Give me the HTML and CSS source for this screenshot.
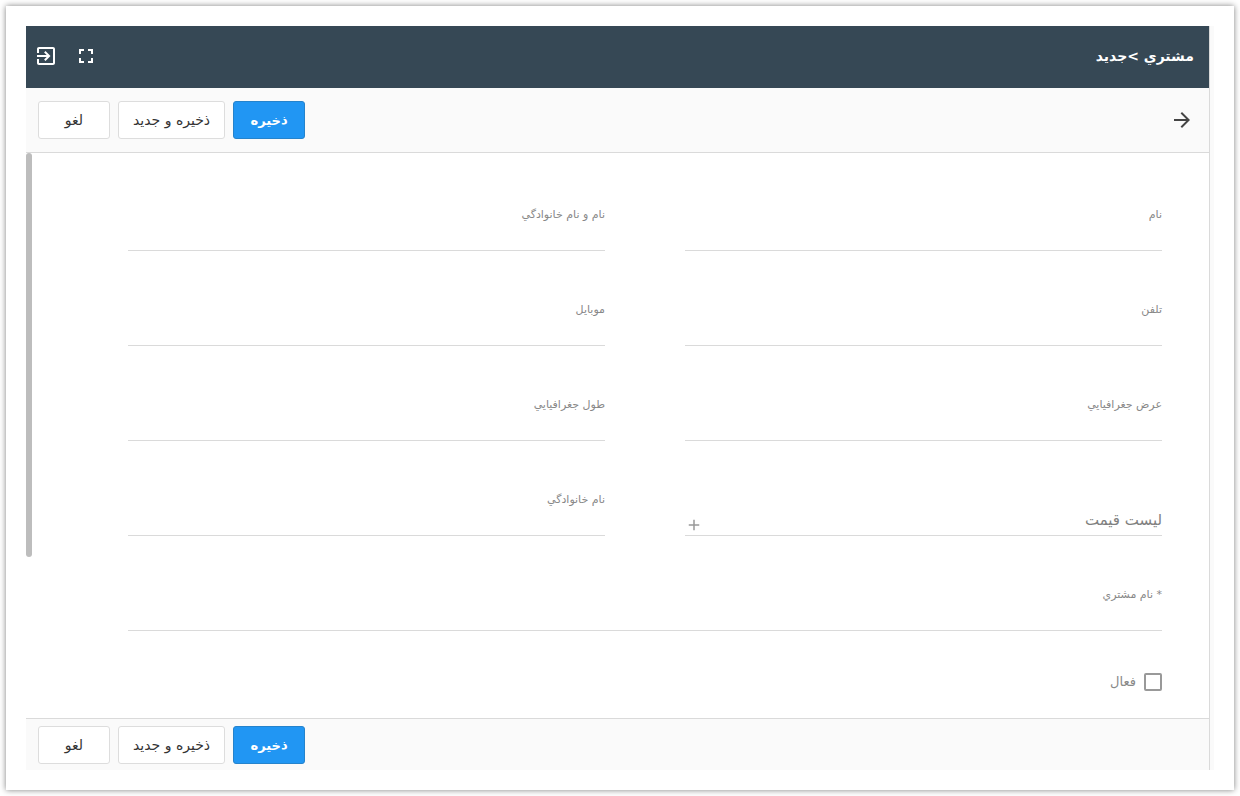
FILE: index.html
```html
<!DOCTYPE html>
<html lang="fa" dir="rtl">
<head>
    <meta charset="UTF-8">
    <title>مشتري - جديد</title>
    <meta name="viewport" content="width=device-width, initial-scale=1.0">
    <link rel="stylesheet" href="styles.css">
</head>
<body>
    <div class="frame">
        <div class="app">
            <header class="header">
                <h1 class="title">مشتري &gt;جديد</h1>
                <div class="header-actions">
                    <button class="icon-button" type="button" aria-label="تمام صفحه">
                        <svg width="24" height="24" viewBox="0 0 24 24"><path d="M7 14H5v5h5v-2H7v-3zm-2-4h2V7h3V5H5v5zm12 7h-3v2h5v-5h-2v3zM14 5v2h3v3h2V5h-5z"/></svg>
                    </button>
                    <button class="icon-button" type="button" aria-label="خروج">
                        <svg width="24" height="24" viewBox="0 0 24 24"><path d="M10.09 15.59L11.5 17l5-5-5-5-1.41 1.41L12.67 11H3v2h9.67l-2.58 2.59zM19 3H5c-1.11 0-2 .9-2 2v4h2V5h14v14H5v-4H3v4c0 1.1.89 2 2 2h14c1.1 0 2-.9 2-2V5c0-1.1-.9-2-2-2z"/></svg>
                    </button>
                </div>
            </header>

            <div class="toolbar">
                <button class="icon-button back" type="button" aria-label="بازگشت">
                    <svg width="24" height="24" viewBox="0 0 24 24"><path d="M12 4l-1.41 1.41L16.17 11H4v2h12.17l-5.58 5.59L12 20l8-8z"/></svg>
                </button>
                <div class="buttons">
                    <button class="btn btn-primary" type="submit" form="customer">ذخيره</button>
                    <button class="btn" type="button">ذخيره و جديد</button>
                    <button class="btn" type="button">لغو</button>
                </div>
            </div>

            <main class="content">
                <form class="form" id="customer">
                    <div class="fields">
                        <div class="field">
                            <label for="name">نام</label>
                            <input type="text" id="name">
                        </div>
                        <div class="field">
                            <label for="fullname">نام و نام خانوادگي</label>
                            <input type="text" id="fullname">
                        </div>
                        <div class="field">
                            <label for="phone">تلفن</label>
                            <input type="tel" id="phone">
                        </div>
                        <div class="field">
                            <label for="mobile">موبايل</label>
                            <input type="tel" id="mobile">
                        </div>
                        <div class="field">
                            <label for="lat">عرض جغرافيايي</label>
                            <input type="text" id="lat">
                        </div>
                        <div class="field">
                            <label for="lng">طول جغرافيايي</label>
                            <input type="text" id="lng">
                        </div>
                        <div class="field lookup">
                            <input type="text" id="pricelist" placeholder="ليست قيمت" aria-label="ليست قيمت">
                            <button class="add" type="button" aria-label="افزودن">
                                <svg width="18" height="18" viewBox="0 0 24 24"><path d="M19 13h-6v6h-2v-6H5v-2h6V5h2v6h6v2z"/></svg>
                            </button>
                        </div>
                        <div class="field">
                            <label for="lastname">نام خانوادگي</label>
                            <input type="text" id="lastname">
                        </div>
                        <div class="field wide">
                            <label for="customername">* نام مشتري</label>
                            <input type="text" id="customername">
                        </div>
                    </div>
                    <label class="check">
                        <input type="checkbox" id="active">
                        فعال
                    </label>
                </form>
                <div class="scroll"><div class="thumb"></div></div>
            </main>

            <footer class="footer">
                <div class="buttons">
                    <button class="btn btn-primary" type="submit" form="customer">ذخيره</button>
                    <button class="btn" type="button">ذخيره و جديد</button>
                    <button class="btn" type="button">لغو</button>
                </div>
            </footer>
        </div>
    </div>
</body>
</html>
```
FILE: styles.css
```css
* {
    box-sizing: border-box;
}
body {
    margin: 0;
    padding: 6px;
    min-height: 100vh;
    display: flex;
    background: #fff;
    font-family: "DejaVu Sans", sans-serif;
    color: #333;
}
.frame {
    flex: 1;
    display: flex;
    padding: 20px;
    background: #fff;
    box-shadow: 0 0 6px rgba(0, 0, 0, 0.5);
}
.app {
    flex: 1;
    display: flex;
    flex-direction: column;
    border-right: 4px solid #fafafa;
    box-shadow: inset -1px 0 #dadada;
    padding-right: 1px;
}
button, input {
    font-family: inherit;
}
.header {
    display: flex;
    align-items: center;
    justify-content: space-between;
    height: 62px;
    padding: 0 15px 2px 8px;
    background: #364855;
    color: #fff;
}
.title {
    margin: 0;
    font-size: 14px;
    font-weight: bold;
}
.header-actions {
    display: flex;
    gap: 16px;
}
.icon-button {
    display: flex;
    padding: 0;
    border: 0;
    background: none;
    color: inherit;
    cursor: pointer;
}
svg {
    fill: currentColor;
}
.toolbar, .footer {
    display: flex;
    align-items: center;
    background: #fafafa;
    padding: 0 15px 0 12px;
}
.toolbar {
    height: 65px;
    border-bottom: 1px solid #dadada;
}
.footer {
    height: 52px;
    padding-top: 1px;
    border-top: 1px solid #dadada;
}
.back {
    color: #444;
}
.buttons {
    display: flex;
    gap: 8px;
    margin-right: auto;
}
.btn {
    min-width: 72px;
    height: 38px;
    padding: 0 14px;
    border: 1px solid #ddd;
    border-radius: 3px;
    background: #fff;
    color: #333;
    font-size: 14px;
    cursor: pointer;
}
.btn-primary {
    border-color: #2583cc;
    background: #2196f3;
    color: #fff;
    font-size: 13px;
    font-weight: bold;
}
.content {
    flex: 1;
    display: flex;
}
.form {
    flex: 1;
    padding: 52px 47px 27px 96px;
}
.fields {
    display: grid;
    grid-template-columns: 1fr 1fr;
    gap: 49px 80px;
}
.field {
    display: flex;
    flex-direction: column;
    height: 46px;
    border-bottom: 1px solid #dadada;
}
.field label {
    font-size: 11px;
    line-height: 20px;
    color: #888;
}
.field input {
    flex: 1;
    min-width: 0;
    min-height: 0;
    padding: 0;
    border: 0;
    outline: 0;
    background: none;
    font-size: 15px;
    color: #333;
}
.field input::placeholder {
    color: #808080;
    opacity: 1;
}
.lookup {
    flex-direction: row;
    align-items: flex-end;
}
.lookup input {
    height: 30px;
}
.add {
    display: flex;
    margin: 0 0 1px;
    padding: 0;
    border: 0;
    background: none;
    color: #999;
}
.wide {
    grid-column: 1 / -1;
}
.check {
    display: flex;
    align-items: center;
    gap: 8px;
    width: fit-content;
    margin-top: 42px;
    font-size: 13px;
    line-height: 18px;
    color: #888;
}
.check input {
    appearance: none;
    width: 18px;
    height: 18px;
    margin: 0;
    border: 2px solid #999;
    border-radius: 2px;
    background: #fff;
}
.scroll {
    width: 6px;
}
.thumb {
    height: 404px;
    border-radius: 3px;
    background: #bdbdbd;
}
```
